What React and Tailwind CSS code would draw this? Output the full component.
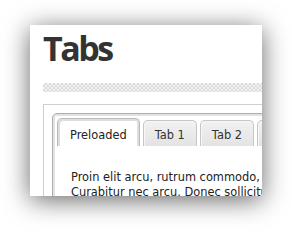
export default function App() {
  const tabs = ["Preloaded", "Tab 1", "Tab 2", "Tab 3"];

  return (
    <div className="w-[292px] h-[232px] bg-white overflow-hidden pl-[30px] pt-[25px]">
      <div className="w-[232px] h-[171px] bg-white overflow-hidden shadow-[0_4px_24px_rgba(0,0,0,0.6)]">
        <div className="w-[340px] pl-[13px] pt-[6px]">
          <h1 className="font-['Open_Sans',sans-serif] font-bold text-[34px] leading-[34px] tracking-[-2.5px] text-[#333]">
            Tabs
          </h1>
          <div className="mt-[18px] h-[9px] bg-[repeating-conic-gradient(#dcdcdc_0%_25%,#f1f1f1_0%_50%)] bg-[length:4px_4px]" />
          <div className="mt-[12px] border border-[#cfcfcf] pl-[8px] pt-[8px]">
            <div className="rounded-[5px] border border-[#adadad] shadow-[inset_0_0_0_2px_#e2e2e2] p-[4px] h-[120px] font-['DejaVu_Sans',Verdana,sans-serif]">
              <div className="flex items-end gap-[3px]">
                {tabs.map((t, i) => (
                  <div
                    key={t}
                    className={
                      i === 0
                        ? "h-[28px] px-[12px] pt-[10px] rounded-t-[5px] border border-b-0 border-[#b9b9b9] shadow-[inset_2px_2px_0_#dedede,inset_-2px_0_0_#dedede] bg-white text-[11.4px] leading-[13px] text-[#222] whitespace-nowrap"
                        : "h-[26px] px-[11px] pt-[8px] rounded-t-[5px] border border-b-0 border-[#c6c6c6] shadow-[inset_1px_1px_0_#f7f7f7] bg-gradient-to-b from-[#f2f2f2] to-[#e3e3e3] text-[11.4px] leading-[13px] text-[#333] whitespace-nowrap"
                    }
                  >
                    {t}
                  </div>
                ))}
              </div>
              <div className="pl-[14px] pt-[24px] text-[11.4px] leading-[15px] text-[#222] whitespace-nowrap">
                <p>Proin elit arcu, rutrum commodo, vehicula tempus, commodo a, risus.</p>
                <p>Curabitur nec arcu. Donec sollicitudin mi sit amet mauris.</p>
              </div>
            </div>
          </div>
        </div>
      </div>
    </div>
  );
}
